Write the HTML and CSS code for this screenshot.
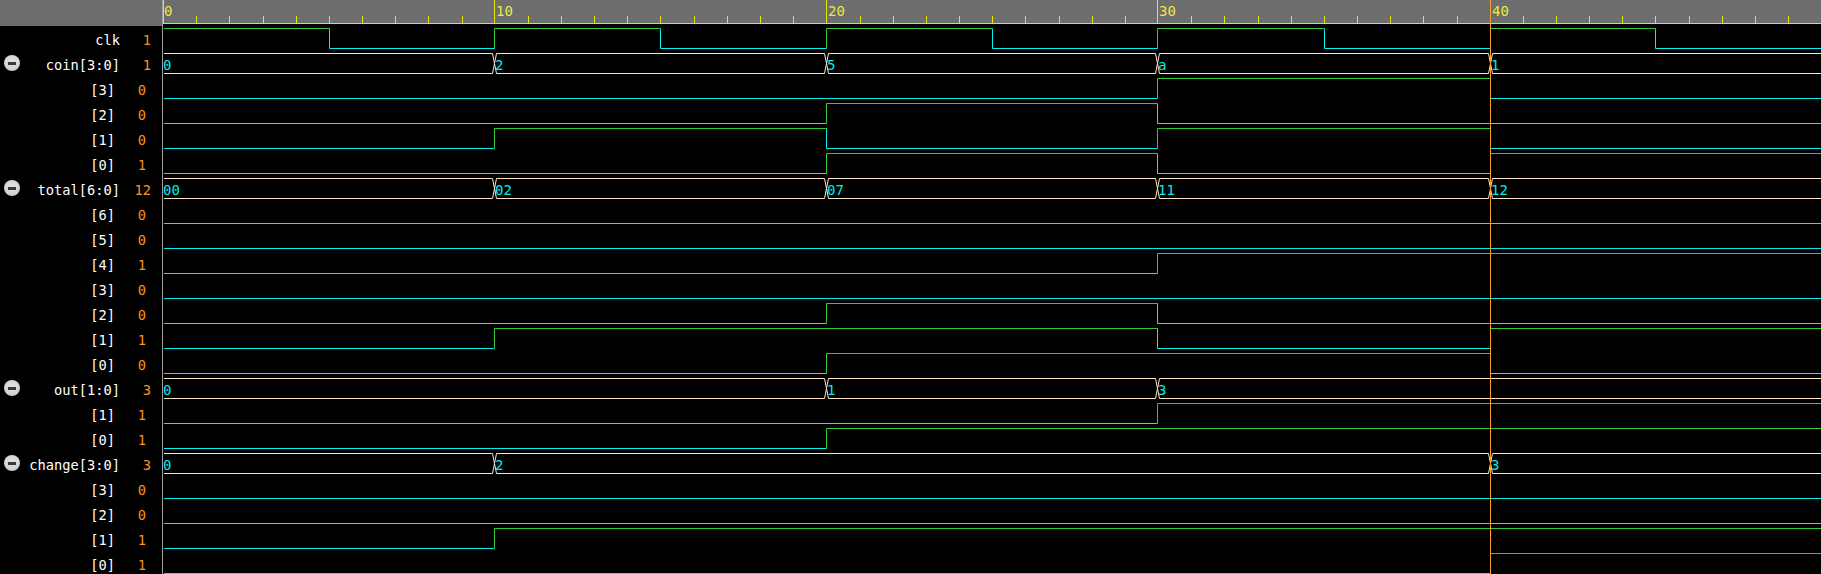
FILE: index.html
```html
<!DOCTYPE html>
<html>
<head>
<meta charset="utf-8">
<title>Waveform</title>
<link rel="stylesheet" href="styles.css">
</head>
<body>
<div class="app">
  <div class="names">
    <div class="names-head"></div>
    <div class="row sig"><span class="name">clk</span><span class="val">1</span></div>
    <div class="row sig"><span class="tog"></span><span class="name">coin[3:0]</span><span class="val">1</span></div>
    <div class="row bit"><span class="name">[3]</span><span class="val">0</span></div>
    <div class="row bit"><span class="name">[2]</span><span class="val">0</span></div>
    <div class="row bit"><span class="name">[1]</span><span class="val">0</span></div>
    <div class="row bit"><span class="name">[0]</span><span class="val">1</span></div>
    <div class="row sig"><span class="tog"></span><span class="name">total[6:0]</span><span class="val">12</span></div>
    <div class="row bit"><span class="name">[6]</span><span class="val">0</span></div>
    <div class="row bit"><span class="name">[5]</span><span class="val">0</span></div>
    <div class="row bit"><span class="name">[4]</span><span class="val">1</span></div>
    <div class="row bit"><span class="name">[3]</span><span class="val">0</span></div>
    <div class="row bit"><span class="name">[2]</span><span class="val">0</span></div>
    <div class="row bit"><span class="name">[1]</span><span class="val">1</span></div>
    <div class="row bit"><span class="name">[0]</span><span class="val">0</span></div>
    <div class="row sig"><span class="tog"></span><span class="name">out[1:0]</span><span class="val">3</span></div>
    <div class="row bit"><span class="name">[1]</span><span class="val">1</span></div>
    <div class="row bit"><span class="name">[0]</span><span class="val">1</span></div>
    <div class="row sig"><span class="tog"></span><span class="name">change[3:0]</span><span class="val">3</span></div>
    <div class="row bit"><span class="name">[3]</span><span class="val">0</span></div>
    <div class="row bit"><span class="name">[2]</span><span class="val">0</span></div>
    <div class="row bit"><span class="name">[1]</span><span class="val">1</span></div>
    <div class="row bit"><span class="name">[0]</span><span class="val">1</span></div>
  </div>
  <div class="sep"></div>
  <div class="waves">
    <svg class="wave-svg" width="1658" height="574" viewBox="0 0 1658 574">
      <rect class="ruler" x="0" y="0" width="1658" height="23"/>
      <path class="tick" d="M0.5 0V23 M331.5 0V23 M663.5 0V23 M994.5 0V23 M1327.5 0V23 M0 23.5H1658
        M33.5 16V23 M66.5 16V23 M100.5 16V23 M133.5 16V23 M166.5 16V23 M199.5 16V23 M232.5 16V23 M265.5 16V23 M299.5 16V23
        M365.5 16V23 M398.5 16V23 M431.5 16V23 M464.5 16V23 M497.5 16V23 M531.5 16V23 M564.5 16V23 M597.5 16V23 M630.5 16V23
        M697.5 16V23 M730.5 16V23 M763.5 16V23 M796.5 16V23 M829.5 16V23 M862.5 16V23 M896.5 16V23 M929.5 16V23 M962.5 16V23
        M1028.5 16V23 M1061.5 16V23 M1095.5 16V23 M1128.5 16V23 M1161.5 16V23 M1194.5 16V23 M1227.5 16V23 M1260.5 16V23 M1294.5 16V23
        M1360.5 16V23 M1393.5 16V23 M1426.5 16V23 M1459.5 16V23 M1492.5 16V23 M1526.5 16V23 M1559.5 16V23 M1592.5 16V23 M1625.5 16V23"/>
      <text class="rt" x="1" y="15.5">0</text>
      <text class="rt" x="333" y="15.5">10</text>
      <text class="rt" x="665" y="15.5">20</text>
      <text class="rt" x="996" y="15.5">30</text>
      <text class="rt" x="1329" y="15.5">40</text>

      <!-- clk -->
      <path class="hi" d="M1 28.5H166.5 M331.5 48.5V28.5H497.5 M663.5 48.5V28.5H829.5 M994.5 48.5V28.5H1161.5 M1327.5 48.5V28.5H1492.5"/>
      <path class="lo" d="M166.5 28.5V48.5H331.5 M497.5 28.5V48.5H663.5 M829.5 28.5V48.5H994.5 M1161.5 28.5V48.5H1327.5 M1492.5 28.5V48.5H1658"/>

      <!-- coin bus -->
      <path class="bus" d="M1 53.5H329.5L331.5 63.5L329.5 73.5H1
        M333.5 53.5H661.5L663.5 63.5L661.5 73.5H333.5L331.5 63.5Z
        M665.5 53.5H992.5L994.5 63.5L992.5 73.5H665.5L663.5 63.5Z
        M996.5 53.5H1325.5L1327.5 63.5L1325.5 73.5H996.5L994.5 63.5Z
        M1658 53.5H1329.5L1327.5 63.5L1329.5 73.5H1658"/>
      <text class="bv" x="0" y="69.5">0</text>
      <text class="bv" x="332" y="69.5">2</text>
      <text class="bv" x="664" y="69.5">5</text>
      <text class="bv" x="995" y="69.5">a</text>
      <text class="bv" x="1328" y="69.5">1</text>

      <!-- coin bits -->
      <path class="hi" d="M994.5 98.5V78.5H1327.5"/>
      <path class="lo" d="M1 98.5H994.5 M1327.5 78.5V98.5H1658"/>
      <path class="hi" d="M663.5 123.5V103.5H994.5"/>
      <path class="lo" d="M1 123.5H663.5 M994.5 103.5V123.5H1658"/>
      <path class="hi" d="M331.5 148.5V128.5H663.5 M994.5 148.5V128.5H1327.5"/>
      <path class="lo" d="M1 148.5H331.5 M663.5 128.5V148.5H994.5 M1327.5 128.5V148.5H1658"/>
      <path class="hi" d="M663.5 173.5V153.5H994.5 M1327.5 173.5V153.5H1658"/>
      <path class="lo" d="M1 173.5H663.5 M994.5 153.5V173.5H1327.5"/>

      <!-- total bus -->
      <path class="bus" d="M1 178.5H329.5L331.5 188.5L329.5 198.5H1
        M333.5 178.5H661.5L663.5 188.5L661.5 198.5H333.5L331.5 188.5Z
        M665.5 178.5H992.5L994.5 188.5L992.5 198.5H665.5L663.5 188.5Z
        M996.5 178.5H1325.5L1327.5 188.5L1325.5 198.5H996.5L994.5 188.5Z
        M1658 178.5H1329.5L1327.5 188.5L1329.5 198.5H1658"/>
      <text class="bv" x="0" y="194.5">00</text>
      <text class="bv" x="332" y="194.5">02</text>
      <text class="bv" x="664" y="194.5">07</text>
      <text class="bv" x="995" y="194.5">11</text>
      <text class="bv" x="1328" y="194.5">12</text>

      <!-- total bits -->
      <path class="lo" d="M1 223.5H1658"/>
      <path class="lo" d="M1 248.5H1658"/>
      <path class="hi" d="M994.5 273.5V253.5H1658"/>
      <path class="lo" d="M1 273.5H994.5"/>
      <path class="lo" d="M1 298.5H1658"/>
      <path class="hi" d="M663.5 323.5V303.5H994.5"/>
      <path class="lo" d="M1 323.5H663.5 M994.5 303.5V323.5H1658"/>
      <path class="hi" d="M331.5 348.5V328.5H994.5 M1327.5 348.5V328.5H1658"/>
      <path class="lo" d="M1 348.5H331.5 M994.5 328.5V348.5H1327.5"/>
      <path class="hi" d="M663.5 373.5V353.5H1327.5"/>
      <path class="lo" d="M1 373.5H663.5 M1327.5 353.5V373.5H1658"/>

      <!-- out bus -->
      <path class="bus" d="M1 378.5H661.5L663.5 388.5L661.5 398.5H1
        M665.5 378.5H992.5L994.5 388.5L992.5 398.5H665.5L663.5 388.5Z
        M1658 378.5H996.5L994.5 388.5L996.5 398.5H1658"/>
      <text class="bv" x="0" y="394.5">0</text>
      <text class="bv" x="664" y="394.5">1</text>
      <text class="bv" x="995" y="394.5">3</text>

      <!-- out bits -->
      <path class="hi" d="M994.5 423.5V403.5H1658"/>
      <path class="lo" d="M1 423.5H994.5"/>
      <path class="hi" d="M663.5 448.5V428.5H1658"/>
      <path class="lo" d="M1 448.5H663.5"/>

      <!-- change bus -->
      <path class="bus" d="M1 453.5H329.5L331.5 463.5L329.5 473.5H1
        M333.5 453.5H1325.5L1327.5 463.5L1325.5 473.5H333.5L331.5 463.5Z
        M1658 453.5H1329.5L1327.5 463.5L1329.5 473.5H1658"/>
      <text class="bv" x="0" y="469.5">0</text>
      <text class="bv" x="332" y="469.5">2</text>
      <text class="bv" x="1328" y="469.5">3</text>

      <!-- change bits -->
      <path class="lo" d="M1 498.5H1658"/>
      <path class="lo" d="M1 523.5H1658"/>
      <path class="hi" d="M331.5 548.5V528.5H1658"/>
      <path class="lo" d="M1 548.5H331.5"/>
      <path class="hi" d="M1327.5 573.5V553.5H1658"/>
      <path class="lo" d="M1 573.5H1327.5"/>

      <!-- cursor -->
      <path class="cursor" d="M1327.5 0V574"/>
    </svg>
  </div>
</div>
</body>
</html>
```

FILE: styles.css
```css
* {
  box-sizing: border-box;
}

html,
body {
  margin: 0;
  padding: 0;
  background: #000;
  overflow: hidden;
}

.app {
  display: flex;
  width: 1821px;
  height: 574px;
  overflow: hidden;
}

.names {
  flex: none;
  width: 162px;
}

.names-head {
  height: 26px;
  margin-bottom: 2px;
  background: #6d6d6d;
}

.row {
  display: flex;
  align-items: center;
  height: 25px;
  font-family: "DejaVu Sans Mono", "Liberation Mono", monospace;
  font-size: 13.7px;
  line-height: 25px;
}

.row.sig {
  padding-right: 11px;
}

.row.bit {
  padding-right: 16px;
}

.name {
  flex: 1;
  text-align: right;
  color: #ffffff;
  white-space: nowrap;
}

.val {
  flex: none;
  width: 31px;
  text-align: right;
  color: #f7931e;
}

.tog {
  flex: none;
  align-self: flex-start;
  display: flex;
  align-items: center;
  justify-content: center;
  width: 16px;
  height: 16px;
  margin-top: 2px;
  margin-left: 4px;
  border-radius: 50%;
  background: radial-gradient(circle at 50% 40%, #e4e4e4 0%, #d4d4d4 60%, #b8b8b8 100%);
}

.tog::after {
  content: "";
  width: 8px;
  height: 3px;
  background: #3a3a3a;
}

.sep {
  flex: none;
  width: 1px;
  background: #a0a0a0;
}

.waves {
  flex: 1;
  overflow: hidden;
}

.wave-svg {
  display: block;
}

.ruler {
  fill: #6d6d6d;
}

.tick {
  fill: none;
  stroke: #e6e600;
  stroke-width: 1;
}

.rt {
  fill: #e8e84c;
  font-family: "DejaVu Sans Mono", "Liberation Mono", monospace;
  font-size: 14px;
}

.hi {
  fill: none;
  stroke: #33cc33;
  stroke-width: 1;
}

.lo {
  fill: none;
  stroke: #00eeee;
  stroke-width: 1;
}

.bus {
  fill: none;
  stroke: #ffe4c4;
  stroke-width: 1;
}

.bv {
  fill: #00eeee;
  font-family: "DejaVu Sans Mono", "Liberation Mono", monospace;
  font-size: 14px;
}

.cursor {
  fill: none;
  stroke: #f0a030;
  stroke-width: 1;
}
```
